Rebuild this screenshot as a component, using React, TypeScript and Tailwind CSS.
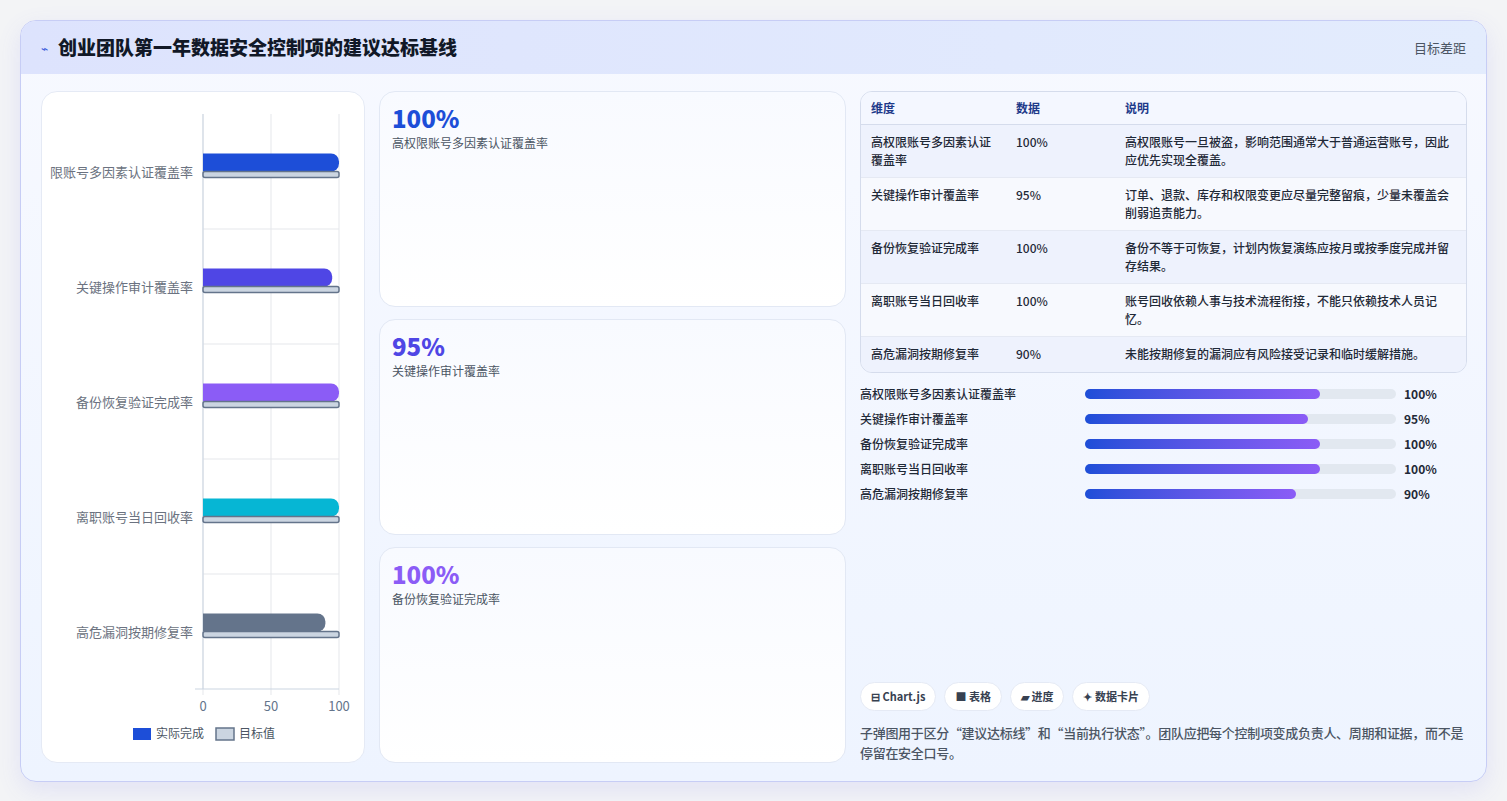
const ITEMS = [
  { name: "高权限账号多因素认证覆盖率", short: "限账号多因素认证覆盖率", value: 100, color: "#1d4ed8", desc: "高权限账号一旦被盗，影响范围通常大于普通运营账号，因此应优先实现全覆盖。" },
  { name: "关键操作审计覆盖率", short: "关键操作审计覆盖率", value: 95, color: "#4f46e5", desc: "订单、退款、库存和权限变更应尽量完整留痕，少量未覆盖会削弱追责能力。" },
  { name: "备份恢复验证完成率", short: "备份恢复验证完成率", value: 100, color: "#8b5cf6", desc: "备份不等于可恢复，计划内恢复演练应按月或按季度完成并留存结果。" },
  { name: "离职账号当日回收率", short: "离职账号当日回收率", value: 100, color: "#06b6d4", desc: "账号回收依赖人事与技术流程衔接，不能只依赖技术人员记忆。" },
  { name: "高危漏洞按期修复率", short: "高危漏洞按期修复率", value: 90, color: "#64748b", desc: "未能按期修复的漏洞应有风险接受记录和临时缓解措施。" },
];

const font = { fontFamily: '"Noto Sans CJK SC", "Noto Sans", sans-serif' };

function Chart() {
  // plot area in card coordinates
  const x0 = 161, x1 = 297, y0 = 22, band = 115;
  return (
    <svg width="324" height="670" viewBox="0 0 324 670">
      {[0, 50, 100].map((t) => {
        const x = x0 + (t / 100) * (x1 - x0);
        return <line key={t} x1={x} x2={x} y1={y0} y2={y0 + band * 5 + 6} stroke="#e5e7eb" strokeWidth="1" />;
      })}
      {[1, 2, 3, 4].map((i) => (
        <line key={i} x1={x0} x2={x1} y1={y0 + band * i} y2={y0 + band * i} stroke="#e5e7eb" />
      ))}
      <line x1={x0} x2={x0} y1={y0} y2={y0 + band * 5} stroke="#cbd5e1" />
      <line x1={x0 - 8} x2={x1} y1={y0 + band * 5} y2={y0 + band * 5} stroke="#cbd5e1" />
      {ITEMS.map((it, i) => {
        const cy = y0 + band * i + band / 2;
        const w = (it.value / 100) * (x1 - x0);
        return (
          <g key={it.name}>
            <text x={x0 - 10} y={cy + 5} textAnchor="end" fontSize="13" fill="#6b7280" style={font}>{it.short}</text>
            <path d={`M${x0} ${cy - 18} H${x0 + w - 8} A8 8 0 0 1 ${x0 + w} ${cy - 10} V${cy - 8} A8 8 0 0 1 ${x0 + w - 8} ${cy} H${x0} Z`} fill={it.color} />
            <rect x={x0} y={cy} width={x1 - x0} height="6" rx="2" fill="#cbd5e1" stroke="#64748b" strokeWidth="1.5" />
          </g>
        );
      })}
      {[0, 50, 100].map((t) => (
        <text key={t} x={x0 + (t / 100) * (x1 - x0)} y={619} textAnchor="middle" fontSize="13" fill="#64748b" style={font}>{t}</text>
      ))}
      <rect x="91" y="636" width="18" height="12" fill="#1d4ed8" />
      <text x="114" y="646" fontSize="12" fill="#4b5563" style={font}>实际完成</text>
      <rect x="174" y="636" width="18" height="12" fill="#cbd5e1" stroke="#64748b" strokeWidth="1.5" />
      <text x="197" y="646" fontSize="12" fill="#4b5563" style={font}>目标值</text>
    </svg>
  );
}

export default function App() {
  const statColors = ["text-[#1d4ed8]", "text-[#4f46e5]", "text-[#8b5cf6]"];
  return (
    <div className="w-[1507px] h-[801px] bg-[#f3f4f6] pt-5 px-5" style={font}>
      <div className="h-[762px] rounded-2xl border border-[#c7cdf5] bg-gradient-to-b from-[#f7f9ff] to-[#eef4ff] overflow-hidden shadow-[0_8px_24px_rgba(99,102,241,0.12)] flex flex-col">
        <div className="h-[56px] flex items-center justify-between px-5 bg-gradient-to-r from-[#dde3fd] to-[#e3ecfd]">
          <div className="flex items-center gap-2.5">
            <span className="text-[#3b5bdb] text-xs">⌁</span>
            <h1 className="text-[19px] font-black text-[#111827]">创业团队第一年数据安全控制项的建议达标基线</h1>
          </div>
          <span className="text-[13px] text-[#4b5563]">目标差距</span>
        </div>
        <div className="flex-1 grid grid-cols-[324px_467px_607px] gap-x-[14px] pl-5 pt-[17px] pb-[18px]">
          <div className="bg-white rounded-2xl border border-[#e5eaf5] overflow-hidden">
            <Chart />
          </div>
          <div className="flex flex-col gap-[12px]">
            {ITEMS.slice(0, 3).map((it, i) => (
              <div key={it.name} className="flex-1 bg-gradient-to-b from-[#f8faff] to-white rounded-2xl border border-[#e2e8f4] px-3 pt-2.5">
                <div className={`text-[24px] font-black leading-8 ${statColors[i]}`}>{it.value}%</div>
                <div className="text-[12px] text-[#4b5563]">{it.name}</div>
              </div>
            ))}
          </div>
          <div className="flex flex-col">
            <div className="rounded-xl border border-[#d5dcec] overflow-hidden text-[12px] text-[#1f2937] font-medium">
              <div className="grid grid-cols-[145px_109px_1fr] h-[33px] items-center px-2.5 bg-[#f4f7ff] border-b border-[#d5dcec] font-bold text-[#1e3a8a]">
                <span>维度</span><span>数据</span><span>说明</span>
              </div>
              {ITEMS.map((it, i) => (
                <div key={it.name} className={`grid grid-cols-[145px_109px_1fr] px-2.5 py-2 leading-[18px] ${i % 2 ? "bg-[#f7f9fe]" : "bg-[#eef2fd]"} ${i < 4 ? "border-b border-[#e5e9f3] min-h-[53px]" : "min-h-[35px]"}`}>
                  <span className="pr-[22px]">{it.name}</span>
                  <span>{it.value}%</span>
                  <span>{it.desc}</span>
                </div>
              ))}
            </div>
            <div className="mt-[12px] flex flex-col gap-[8px]">
              {ITEMS.map((it) => (
                <div key={it.name} className="flex items-center h-[17px] text-[12px] font-medium">
                  <span className="w-[225px] text-[#1f2937]">{it.name}</span>
                  <div className="w-[311px] h-[10px] rounded-full bg-[#e2e8f0]">
                    <div className="h-full rounded-full bg-gradient-to-r from-[#1d4ed8] to-[#8b5cf6]" style={{ width: `${it.value * 0.755}%` }} />
                  </div>
                  <span className="ml-2 font-bold text-[#1f2937]">{it.value}%</span>
                </div>
              ))}
            </div>
            <div className="mt-auto">
              <div className="flex gap-2">
                {["⊟ Chart.js", "■ 表格", "▰ 进度", "✦ 数据卡片"].map((c) => (
                  <span key={c} className="px-2.5 h-[29px] flex items-center rounded-full bg-white border border-[#e5eaf5] text-[11px] font-bold text-[#374151]">{c}</span>
                ))}
              </div>
              <p className="mt-3 text-[13px] leading-[20px] text-[#4b5563] font-medium tracking-[-0.3px]">子弹图用于区分“建议达标线”和“当前执行状态”。团队应把每个控制项变成负责人、周期和证据，而不是停留在安全口号。</p>
            </div>
          </div>
        </div>
      </div>
    </div>
  );
}
